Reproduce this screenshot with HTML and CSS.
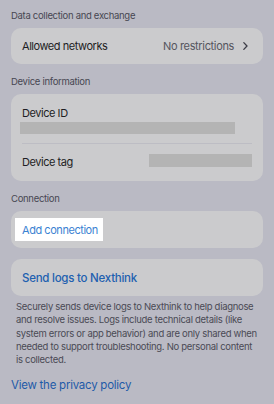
FILE: index.html
```html
<!DOCTYPE html>
<html>
<head>
<meta charset="utf-8">
<link rel="stylesheet" href="styles.css">
</head>
<body>
<div class="page">
  <div class="section-label">Data collection and exchange</div>
  <div class="card row">
    <span class="row-title">Allowed networks</span>
    <span class="row-value">No restrictions
      <svg class="chev" width="7" height="10" viewBox="0 0 7 10"><path d="M1.8 1.6 L5 5 L1.8 8.4" fill="none" stroke="#3c3c46" stroke-width="1.3" stroke-linecap="round" stroke-linejoin="round"/></svg>
    </span>
  </div>

  <div class="section-label">Device information</div>
  <div class="card device">
    <div class="dev-id">
      <div class="row-title">Device ID</div>
      <div class="redact id-bar"></div>
    </div>
    <div class="divider"></div>
    <div class="dev-tag">
      <span class="row-title">Device tag</span>
      <div class="redact tag-bar"></div>
    </div>
  </div>

  <div class="section-label">Connection</div>
  <div class="card link-card">
    <span class="focus-box"><span class="link add">Add connection</span></span>
  </div>

  <div class="card link-card send">
    <span class="link send-link">Send logs to Nexthink</span>
  </div>

  <p class="desc">Securely sends device logs to Nexthink to help diagnose and resolve issues. Logs include technical details (like system errors or app behavior) and are only shared when needed to support troubleshooting. No personal content is collected.</p>

  <a class="privacy">View the privacy policy</a>
</div>
</body>
</html>
```
FILE: styles.css
```css
html, body {
  margin: 0;
  padding: 0;
  background: #babac4;
}
body {
  font-family: Inter, "Noto Sans", sans-serif;
  width: 274px;
  height: 404px;
  overflow: hidden;
}
.page {
  padding: 9px 11px 0 11px;
  display: flex;
  flex-direction: column;
  align-items: stretch;
}
.section-label {
  font-size: 9.5px;
  letter-spacing: -0.3px;
  color: #474752;
  line-height: 14px;
  height: 14px;
  margin-bottom: 5px;
}
.card {
  background: #cbcbcd;
  border-radius: 10px;
}
.row {
  height: 36px;
  display: flex;
  align-items: center;
  justify-content: space-between;
  padding: 0 14px 0 11px;
  margin-bottom: 11px;
}
.row-title {
  font-size: 11px;
  letter-spacing: -0.45px;
  color: #1e1e24;
}
.row-value {
  font-size: 11px;
  letter-spacing: -0.35px;
  color: #55555e;
  display: flex;
  align-items: center;
  gap: 8px;
}
.device {
  height: 87px;
  margin-bottom: 11px;
  display: flex;
  flex-direction: column;
  padding: 0 11px 0 9px;
}
.dev-id {
  padding-top: 11px;
  height: 38px;
}
.dev-id .row-title {
  padding-left: 2px;
  line-height: 16px;
}
.redact {
  background: #b4b4b4;
}
.id-bar {
  width: 215px;
  height: 12px;
  margin-top: 1px;
}
.divider {
  height: 1px;
  background: #bdbdc4;
  margin-left: 2px;
}
.dev-tag {
  flex: 1;
  display: flex;
  align-items: center;
  justify-content: space-between;
  padding-left: 2px;
  padding-bottom: 1px;
}
.tag-bar {
  width: 103px;
  height: 13px;
  margin-top: -4px;
}
.link-card {
  height: 37px;
  display: flex;
  align-items: center;
  padding-left: 4px;
  margin-bottom: 11px;
}
.focus-box {
  background: #ffffff;
  padding: 4px 5px 4px 7px;
  line-height: 13px;
}
.link {
  font-size: 11px;
  letter-spacing: -0.45px;
}
.add {
  color: #3b82d2;
}
.send {
  padding-left: 11px;
  margin-bottom: 4px;
}
.send-link {
  font-size: 11.5px;
  letter-spacing: -0.25px;
  font-weight: 500;
  color: #2160b0;
}
.desc {
  margin: 0;
  padding: 0 4px 0 5px;
  font-size: 9.5px;
  letter-spacing: -0.3px;
  line-height: 13.3px;
  color: #4a4a55;
}
.privacy {
  margin-top: 12px;
  font-size: 11.5px;
  letter-spacing: -0.25px;
  line-height: 14px;
  color: #1f5aa8;
}
```
